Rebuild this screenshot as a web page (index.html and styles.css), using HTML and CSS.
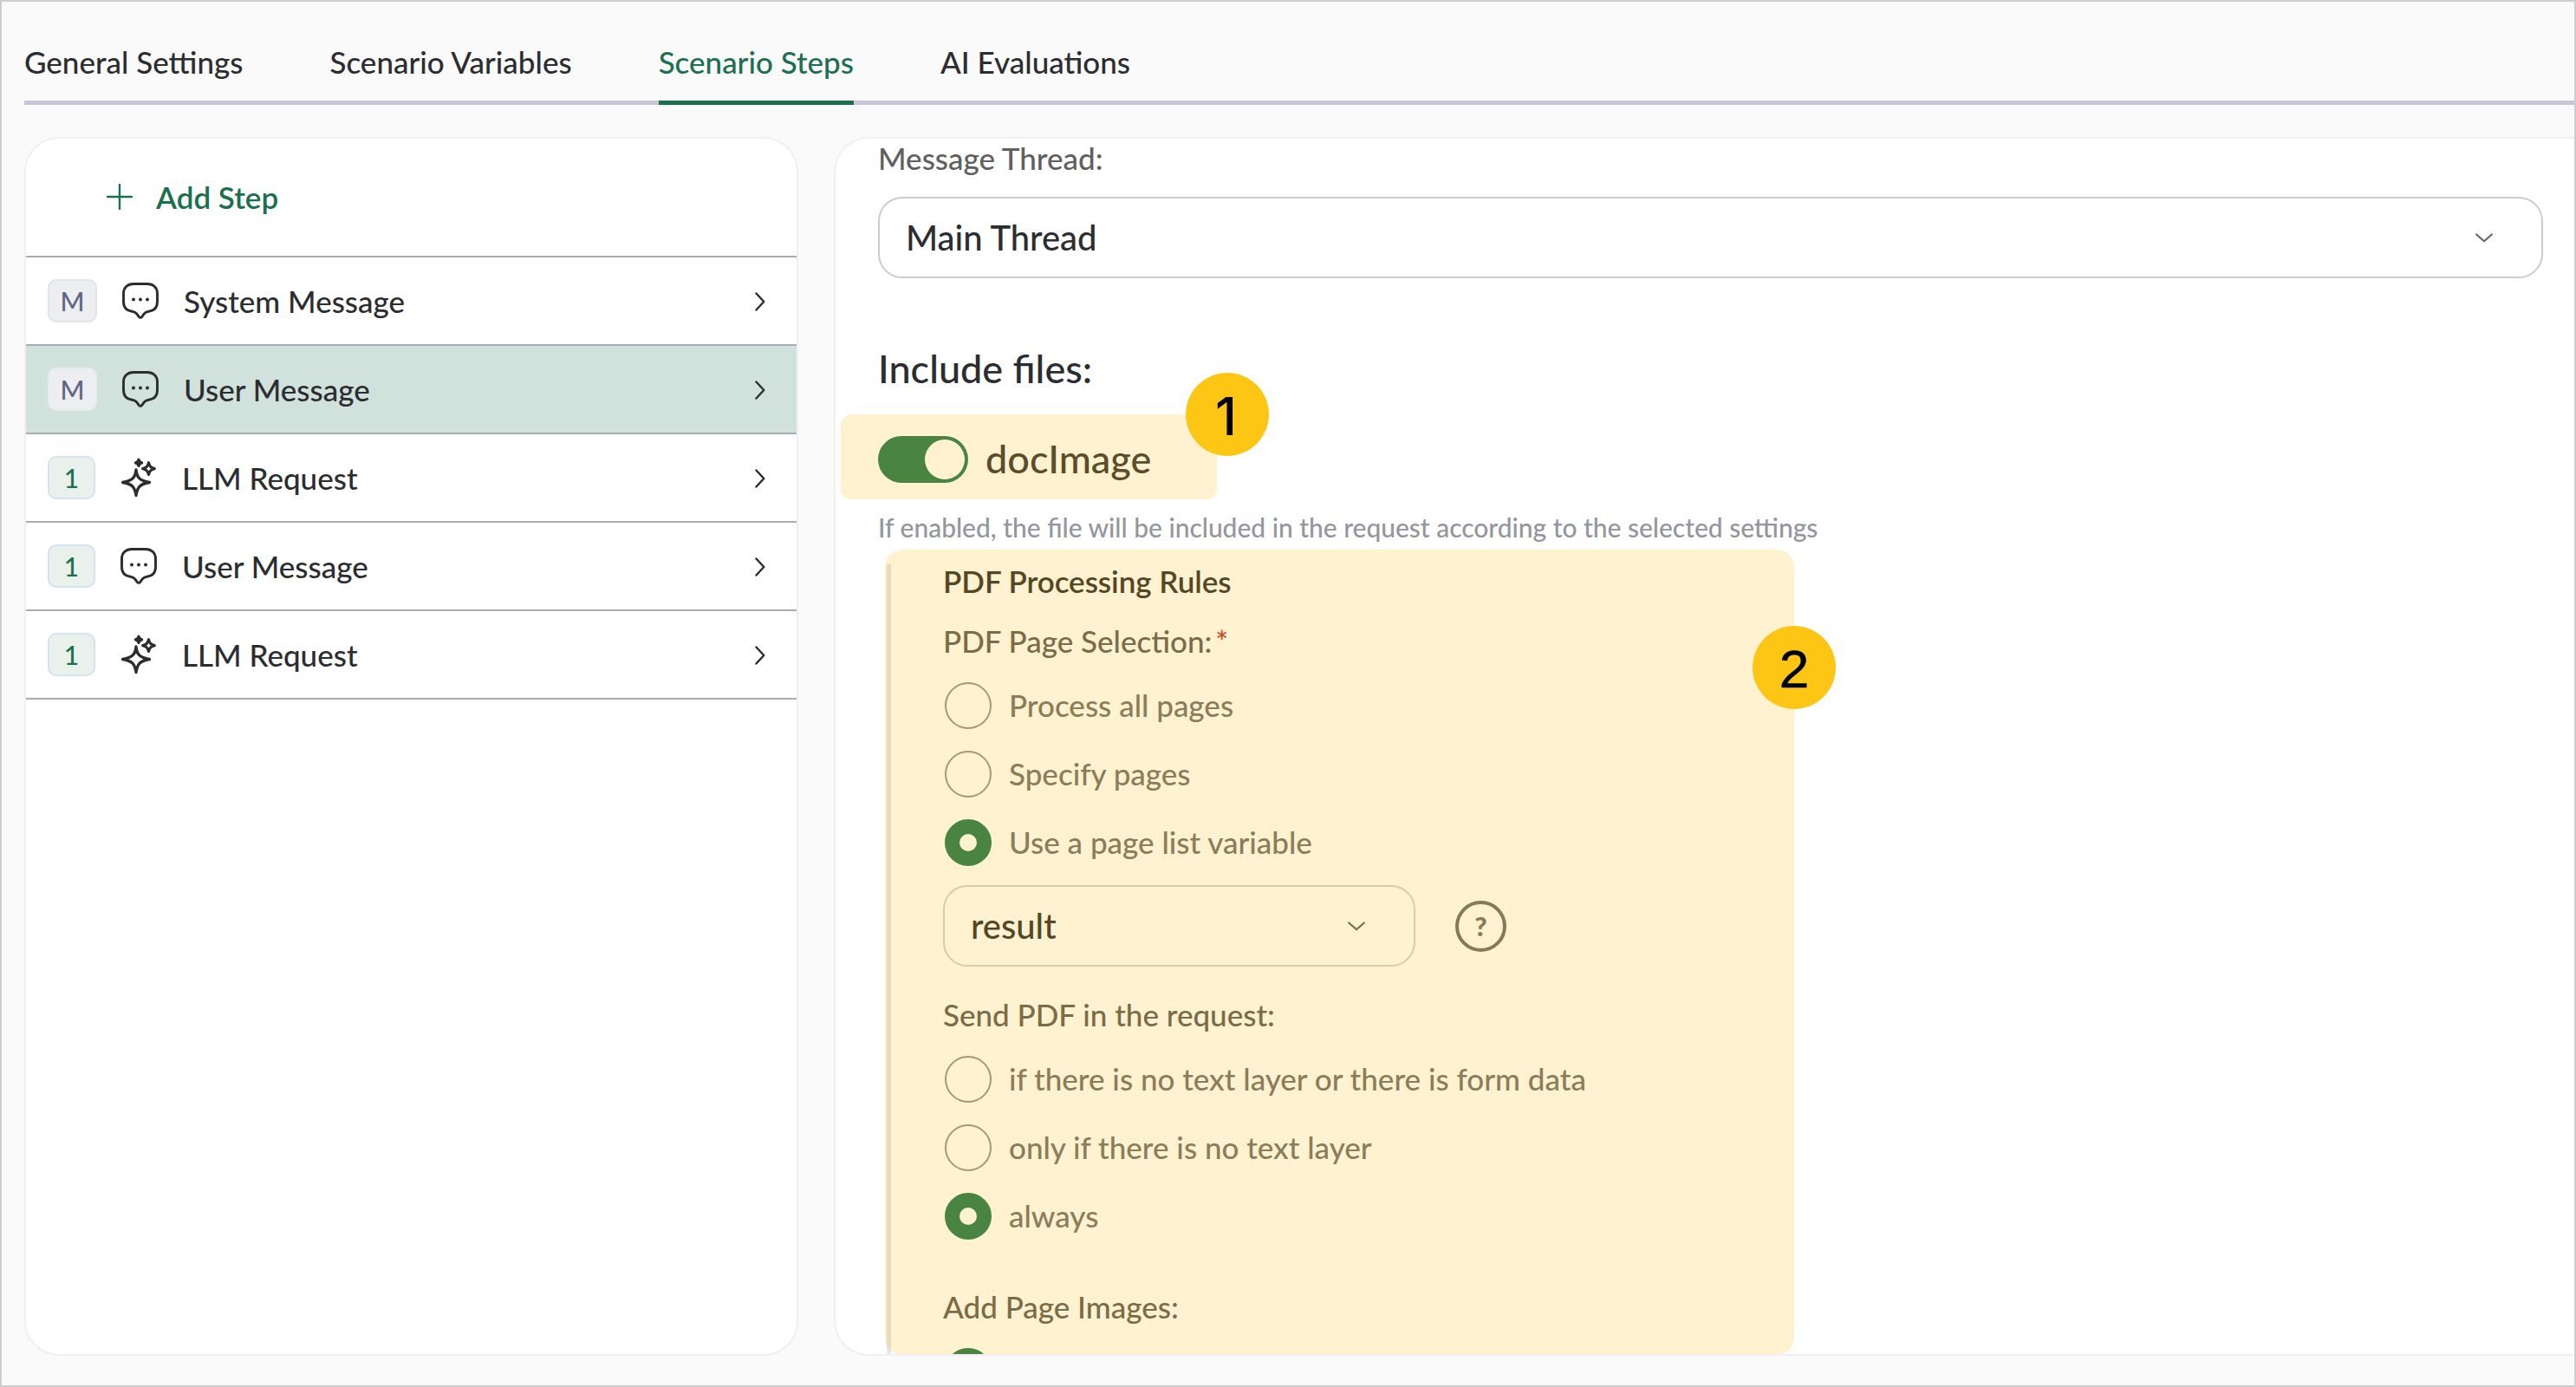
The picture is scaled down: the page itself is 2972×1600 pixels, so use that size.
FILE: index.html
```
<!DOCTYPE html>
<html lang="en">
<head>
    <meta charset="UTF-8">
    <meta name="viewport" content="width=device-width, initial-scale=1.0">
    <title>Scenario Steps</title>
    <link rel="stylesheet" href="styles.css">
</head>
<body>
    <!-- Shared icons -->
    <svg class="sprite" width="0" height="0">
        <symbol id="icon-message" viewBox="0 0 42 42">
            <path d="M13 1.500H29C36 1.500 40.500 6 40.500 12.500V22C40.500 28.500 37 32.300 30.500 33.200C27.500 33.600 26.600 34.100 25.100 36.200L22.800 39.300C21.800 40.700 20.200 40.700 19.200 39.300L16.900 36.200C15.400 34.100 14.500 33.600 11.500 33.200C5 32.300 1.500 28.500 1.500 22V12.500C1.500 6 6 1.500 13 1.500Z" fill="none" stroke="currentColor" stroke-width="2.900"/>
            <circle cx="13" cy="19.500" r="2" fill="currentColor"/>
            <circle cx="21" cy="19.500" r="2" fill="currentColor"/>
            <circle cx="29" cy="19.500" r="2" fill="currentColor"/>
        </symbol>
        <symbol id="icon-sparkles" viewBox="0 0 42 46">
            <g fill="none" stroke="currentColor" stroke-width="3.300" stroke-linejoin="round">
                <path d="M18 14C19 22.500 21.500 26.500 33.500 28.500C21.500 30.500 19.500 34.500 18 43.500C16.500 34.500 14.500 30.500 2.500 28.500C14.500 26.500 17 22.500 18 14Z"/>
                <path d="M32.500 5.800C33.500 10 35 11.700 39.300 12.600C35 13.500 33.500 15.200 32.500 19.400C31.500 15.200 30 13.500 25.700 12.600C30 11.700 31.500 10 32.500 5.800Z"/>
                <path d="M21 2.300C21.500 4.300 22.500 5.200 24.600 5.800C22.500 6.400 21.500 7.300 21 9.300C20.500 7.300 19.500 6.400 17.400 5.800C19.500 5.200 20.500 4.300 21 2.300Z" fill="currentColor"/>
            </g>
        </symbol>
        <symbol id="icon-right" viewBox="0 0 12 22">
            <path d="M1.500 1.500L10.300 11L1.500 20.500" fill="none" stroke="currentColor" stroke-width="2.400" stroke-linecap="round" stroke-linejoin="round"/>
        </symbol>
        <symbol id="icon-down" viewBox="0 0 20 11">
            <path d="M1.200 1.500L10 9.300L18.800 1.500" fill="none" stroke="currentColor" stroke-width="2.200" stroke-linecap="round" stroke-linejoin="round"/>
        </symbol>
    </svg>

    <div class="page">
        <nav class="tabs">
            <a class="tab">General Settings</a>
            <a class="tab">Scenario Variables</a>
            <a class="tab active">Scenario Steps</a>
            <a class="tab">AI Evaluations</a>
        </nav>

        <div class="columns">
            <aside class="steps">
                <div class="add-step">
                    <svg class="plus" viewBox="0 0 30 30"><path d="M15 1V29M1 15H29" stroke="currentColor" stroke-width="2.400" stroke-linecap="round"/></svg>
                    <span>Add Step</span>
                </div>
                <div class="step">
                    <span class="mark">M</span>
                    <svg class="message"><use href="#icon-message"/></svg>
                    <span class="step-name">System Message</span>
                    <svg class="right"><use href="#icon-right"/></svg>
                </div>
                <div class="step selected">
                    <span class="mark">M</span>
                    <svg class="message"><use href="#icon-message"/></svg>
                    <span class="step-name">User Message</span>
                    <svg class="right"><use href="#icon-right"/></svg>
                </div>
                <div class="step">
                    <span class="mark number">1</span>
                    <svg class="sparkles"><use href="#icon-sparkles"/></svg>
                    <span class="step-name">LLM Request</span>
                    <svg class="right"><use href="#icon-right"/></svg>
                </div>
                <div class="step">
                    <span class="mark number">1</span>
                    <svg class="message"><use href="#icon-message"/></svg>
                    <span class="step-name">User Message</span>
                    <svg class="right"><use href="#icon-right"/></svg>
                </div>
                <div class="step">
                    <span class="mark number">1</span>
                    <svg class="sparkles"><use href="#icon-sparkles"/></svg>
                    <span class="step-name">LLM Request</span>
                    <svg class="right"><use href="#icon-right"/></svg>
                </div>
            </aside>

            <main class="details">
                <div class="label">Message Thread:</div>
                <div class="select thread">
                    <span>Main Thread</span>
                    <svg class="down"><use href="#icon-down"/></svg>
                </div>

                <h2>Include files:</h2>
                <div class="file">
                    <span class="toggle"></span>
                    <span class="file-name">docImage</span>
                    <span class="callout first">1</span>
                </div>
                <p class="hint">If enabled, the file will be included in the request according to the selected settings</p>

                <div class="rules">
                    <span class="callout">2</span>
                    <h3>PDF Processing Rules</h3>
                    <div class="label selection">PDF Page Selection:<span class="required">*</span></div>
                    <div class="options">
                        <div class="option"><span class="radio"></span><span>Process all pages</span></div>
                        <div class="option"><span class="radio"></span><span>Specify pages</span></div>
                        <div class="option"><span class="radio checked"></span><span>Use a page list variable</span></div>
                    </div>
                    <div class="variable">
                        <div class="select">
                            <span>result</span>
                            <svg class="down"><use href="#icon-down"/></svg>
                        </div>
                        <span class="help">?</span>
                    </div>
                    <div class="label send">Send PDF in the request:</div>
                    <div class="options">
                        <div class="option"><span class="radio"></span><span>if there is no text layer or there is form data</span></div>
                        <div class="option"><span class="radio"></span><span>only if there is no text layer</span></div>
                        <div class="option"><span class="radio checked"></span><span>always</span></div>
                    </div>
                    <div class="label images">Add Page Images:</div>
                    <div class="options">
                        <div class="option"><span class="radio checked"></span></div>
                    </div>
                </div>
            </main>
        </div>
    </div>
</body>
</html>
```
FILE: styles.css
```
* {
    box-sizing: border-box;
}
body {
    margin: 0;
    font-family: Lato, sans-serif;
    font-size: 35px;
    line-height: 42px;
    font-weight: 500;
    color: #2c2d30;
}
h2, h3, p {
    margin: 0;
}
.sprite {
    position: absolute;
}
.page {
    width: 2972px;
    height: 1600px;
    border: 2px solid #cecece;
    background-color: #fafafa;
    overflow: hidden;
}
/* Tabs */
.tabs {
    display: flex;
    gap: 100px;
    height: 119px;
    margin-left: 26px;
    padding-top: 48px;
    border-bottom: 5px solid #c6c6d6;
}
.tab {
    height: 71px;
    white-space: nowrap;
}
.tab.active {
    color: #1c7050;
    border-bottom: 5px solid #1c7050;
}
.columns {
    display: flex;
    gap: 41px;
    height: 1406px;
    margin: 37px 0 0 26px;
}
/* Steps list */
.steps {
    width: 893px;
    background-color: #ffffff;
    border: 2px solid #f0f0f0;
    border-radius: 40px;
    overflow: hidden;
    flex: none;
}
.add-step {
    display: flex;
    align-items: center;
    gap: 27px;
    height: 137px;
    padding: 0 0 2px 93px;
    border-bottom: 2px solid #a9abb2;
    color: #1c7050;
    font-weight: 600;
}
.plus {
    width: 30px;
    height: 30px;
    margin-top: 1px;
}
.step {
    display: flex;
    align-items: center;
    height: 102px;
    padding: 0 36px 0 25px;
    border-bottom: 2px solid #a9abb8;
}
.selected {
    background-color: #d1e2dc;
}
.mark {
    width: 57px;
    height: 50px;
    margin-right: 29px;
    border: 2px solid #e3e4e8;
    border-radius: 10px;
    background-color: #eceef1;
    color: #5f6582;
    font-size: 30px;
    line-height: 47px;
    text-align: center;
}
.selected .mark {
    border-color: #e8ebee;
}
.number {
    width: 55px;
    border-color: #d5e2f0;
    background-color: #e9f1ed;
    color: #1c7050;
}
.message,
.sparkles {
    width: 42px;
    height: 42px;
    margin-right: 29px;
}
.sparkles {
    height: 46px;
}
.step-name {
    flex: 1;
}
.right {
    width: 12px;
    height: 22px;
    margin-top: 1px;
}
/* Step details */
.details {
    flex: 1;
    padding: 1px 0 0 49px;
    background-color: #ffffff;
    border: 2px solid #f0f0f0;
    border-right: none;
    border-radius: 40px 0 0 40px;
    overflow: hidden;
}
.label {
    color: #606060;
}
.select {
    display: flex;
    justify-content: space-between;
    align-items: center;
    height: 94px;
    border: 2px solid #cccccc;
    border-radius: 28px;
    font-size: 39.900px;
}
.thread {
    margin: 24px 36px 77px 0;
    padding: 0 56px 0 30px;
}
.down {
    width: 20px;
    height: 11px;
    color: #65666b;
}
h2 {
    font-size: 45px;
    line-height: 54px;
    font-weight: 500;
}
.file {
    position: relative;
    display: flex;
    align-items: center;
    width: 434px;
    height: 98px;
    margin: 26px 0 14px -43px;
    padding: 5px 0 0 43px;
    border-radius: 12px;
    background-color: #fff2d1;
    color: #5b4c2a;
    font-size: 45px;
}
.file-name {
    margin-top: -2px;
}
.toggle {
    width: 104px;
    height: 54px;
    margin-right: 20px;
    border-radius: 27px;
    background-color: #4a8442;
}
.toggle::after {
    content: "";
    display: block;
    width: 46px;
    height: 46px;
    margin: 4px 4px 0 54px;
    border-radius: 50%;
    background-color: #fff2d1;
}
/* Numbered callouts */
.callout {
    position: absolute;
    top: -48px;
    left: 398px;
    width: 96px;
    height: 96px;
    border-radius: 50%;
    background-color: #fdc615;
    color: #000000;
    font-family: "Liberation Sans", Arial, sans-serif;
    font-size: 62px;
    line-height: 100px;
    text-align: center;
    -webkit-text-stroke: 0.500px #000000;
}
.callout.first {
    padding-right: 3px;
    font-family: Inter, sans-serif;
    font-size: 60px;
    -webkit-text-stroke: 0;
}
.hint {
    font-size: 29.930px;
    line-height: 36px;
    color: #94969d;
}
.rules {
    position: relative;
    width: 1049px;
    height: 929px;
    margin: 8px 0 0 8px;
    padding: 15px 0 0 67px;
    border-radius: 20px;
    background-color: #fff2d1;
    color: #8b7d58;
}
.rules::before {
    content: "";
    position: absolute;
    top: 17px;
    bottom: 0;
    left: 2px;
    width: 5px;
    background-color: rgba(90, 80, 100, 0.15);
}
.rules .callout {
    top: 88px;
    left: 1001px;
}
h3 {
    font-size: 35px;
    font-weight: 600;
    letter-spacing: -0.05px;
    color: #564724;
}
.rules .label {
    color: #7b6c46;
}
.selection {
    margin: 27px 0 27px;
}
.required {
    margin-left: 4px;
    color: #cc4a2c;
}
.options {
    display: flex;
    flex-direction: column;
    gap: 25px;
}
.option {
    display: flex;
    align-items: center;
    gap: 20px;
    height: 54px;
}
.option span + span {
    margin-top: -3px;
}
.radio {
    width: 54px;
    height: 54px;
    margin-left: 2px;
    border: 2px solid #a39877;
    border-radius: 50%;
}
.radio.checked {
    border: 17px solid #4a8442;
}
.variable {
    display: flex;
    align-items: center;
    gap: 46px;
    margin: 22px 0 34px 0;
}
.rules .select {
    width: 545px;
    padding: 0 56px 0 30px;
    border-color: #d9cba8;
    color: #564724;
}
.rules .down {
    color: #7b6c46;
}
.help {
    width: 59px;
    height: 59px;
    border: 4px solid #877955;
    border-radius: 50%;
    color: #877955;
    font-size: 31px;
    font-weight: 900;
    line-height: 50px;
    text-align: center;
}
.send {
    margin-bottom: 27px;
}
.images {
    margin: 56px 0 27px;
}
```
